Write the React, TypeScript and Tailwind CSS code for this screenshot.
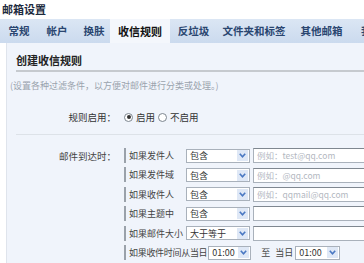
const tabs = [
  { label: "常规", w: "w-[34px]" },
  { label: "帐户", w: "w-[42px]" },
  { label: "换肤", w: "w-[32px]" },
  { label: "收信规则", w: "w-[60px]", active: true },
  { label: "反垃圾", w: "w-[47px]" },
  { label: "文件夹和标签", w: "w-[74px]" },
  { label: "其他邮箱", w: "w-[61px]" },
  { label: "我的卡片", w: "w-[60px]" },
];

const rules = [
  { label: "如果发件人", op: "包含", hint: "例如：test@qq.com" },
  { label: "如果发件域", op: "包含", hint: "例如：@qq.com" },
  { label: "如果收件人", op: "包含", hint: "例如：qqmail@qq.com" },
  { label: "如果主题中", op: "包含", hint: "" },
  { label: "如果邮件大小", op: "大于等于", hint: "" },
];

function Arrow() {
  return (
    <span className="flex h-[11px] w-[11px] shrink-0 items-center justify-center bg-[#dfe8f6]">
      <svg width="7" height="5" viewBox="0 0 7 5">
        <path d="M0.8 0.8 L3.5 3.8 L6.2 0.8" fill="none" stroke="#4a78c2" strokeWidth="1.6" />
      </svg>
    </span>
  );
}

function Select({ value, w }: { value: string; w: string }) {
  return (
    <div
      className={`flex h-[14px] ${w} shrink-0 items-center justify-between border border-[#a9b1bb] bg-white pl-[3px] pr-[1px]`}
    >
      <span className="text-[9px] leading-none text-[#333]">{value}</span>
      <Arrow />
    </div>
  );
}

function Checkbox() {
  return <span className="h-[10px] w-[10px] shrink-0 border border-[#9aa1aa] bg-white" />;
}

export default function App() {
  return (
    <div className="h-[263px] w-[364px] overflow-hidden bg-white font-['Noto_Sans_CJK_SC',sans-serif]">
      <div className="h-[19px] pl-[2px] pt-[2px] text-[11px] font-bold leading-[14px] text-[#1c2a3e]">
        邮箱设置
      </div>

      <div className="flex h-[24px] items-stretch whitespace-nowrap bg-gradient-to-b from-[#dbe6f4] to-[#cbdaee] pl-[2px]">
        {tabs.map((t) => (
          <div
            key={t.label}
            className={`flex ${t.w} shrink-0 items-center justify-center ${
              t.active
                ? "bg-[#f4f7fc] text-[11px] font-bold text-[#111]"
                : "text-[10.5px] font-bold text-[#2a4670]"
            }`}
          >
            {t.label}
          </div>
        ))}
      </div>

      <div className="ml-[6px] h-full border-l border-[#dfe4ec] bg-[#f0f4fb]">
        <div className="ml-[9px] border-b-2 border-[#c6cacf] pb-[3px] pt-[10px] text-[11px] font-bold leading-[14px] text-[#222]">
          创建收信规则
        </div>

        <div className="mt-[8px] whitespace-nowrap pl-[3px] text-[9px] leading-[12px] text-[#9aa3ad]">
          (设置各种过滤条件，以方便对邮件进行分类或处理。)
        </div>

        <div className="mt-[18px] flex h-[14px] items-center text-[9.5px] text-[#333]">
          <span className="w-[111px] shrink-0 pr-[2px] text-right">规则启用：</span>
          <span className="ml-[6px] flex h-[9px] w-[9px] items-center justify-center rounded-full border border-[#7d8690] bg-white">
            <span className="h-[4px] w-[4px] rounded-full bg-[#333]" />
          </span>
          <span className="ml-[3px]">启用</span>
          <span className="ml-[3px] h-[9px] w-[9px] rounded-full border border-[#7d8690] bg-white" />
          <span className="ml-[3px]">不启用</span>
        </div>

        <div className="ml-[9px] mt-[10px] border-b border-[#dde2e8]" />

        <div className="mt-[11px] flex flex-col text-[9px] text-[#444]">
          {rules.map((r, i) => (
            <div key={r.label} className="flex h-[19.4px] items-center whitespace-nowrap">
              <span className="w-[111px] shrink-0 pr-[2px] text-right text-[9.5px]">
                {i === 0 ? "邮件到达时：" : ""}
              </span>
              <span className="ml-[6px]">
                <Checkbox />
              </span>
              <span className="ml-[3px] w-[57px] shrink-0">{r.label}</span>
              <Select value={r.op} w="w-[64px]" />
              <div className="ml-[3px] flex h-[15px] w-[120px] shrink-0 items-center border border-[#a9b1bb] border-t-[#7f8790] bg-white pl-[3px] text-[8.5px] text-[#b3b8bf]">
                {r.hint}
              </div>
            </div>
          ))}
          <div className="flex h-[19.4px] items-center whitespace-nowrap">
            <span className="w-[111px] shrink-0" />
            <span className="ml-[6px]">
              <Checkbox />
            </span>
            <span className="ml-[3px] shrink-0 tracking-[-0.3px]">如果收件时间从当日</span>
            <span className="ml-[1px]">
              <Select value="01:00" w="w-[43px]" />
            </span>
            <span className="ml-[10px]">至</span>
            <span className="ml-[5px]">当日</span>
            <span className="ml-[2px]">
              <Select value="01:00" w="w-[45px]" />
            </span>
          </div>
        </div>
      </div>
    </div>
  );
}
